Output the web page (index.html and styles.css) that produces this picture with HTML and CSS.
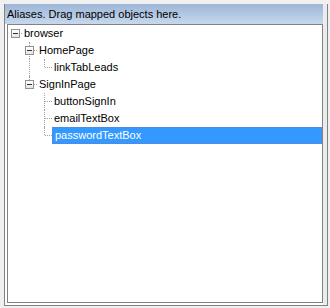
FILE: index.html
```html
<!DOCTYPE html>
<html lang="en">
<head>
  <meta charset="UTF-8" />
  <title>Aliases</title>
  <link rel="stylesheet" href="styles.css">
</head>
<body>

  <div class="frame">
    <div class="main">
      <div class="header">Aliases. Drag mapped objects here.</div>
      <div class="body">
        <div class="tree">

          <div class="row">
            <div class="cell"><span class="h"></span><span class="box"></span></div>
            <span class="label">browser</span>
          </div>

          <div class="row">
            <div class="cell"></div>
            <div class="cell"><span class="v-up"></span><span class="v-down"></span><span class="h"></span><span class="box"></span></div>
            <span class="label">HomePage</span>
          </div>

          <div class="row">
            <div class="cell"></div>
            <div class="cell"><span class="v-full"></span></div>
            <div class="cell"><span class="v-up"></span><span class="h"></span></div>
            <span class="label">linkTabLeads</span>
          </div>

          <div class="row">
            <div class="cell"></div>
            <div class="cell"><span class="v-up"></span><span class="h"></span><span class="box"></span></div>
            <span class="label">SignInPage</span>
          </div>

          <div class="row">
            <div class="cell"></div>
            <div class="cell"></div>
            <div class="cell"><span class="v-full"></span><span class="h"></span></div>
            <span class="label">buttonSignIn</span>
          </div>

          <div class="row">
            <div class="cell"></div>
            <div class="cell"></div>
            <div class="cell"><span class="v-full"></span><span class="h"></span></div>
            <span class="label">emailTextBox</span>
          </div>

          <div class="row">
            <div class="cell"></div>
            <div class="cell"></div>
            <div class="cell"><span class="v-up"></span><span class="h"></span></div>
            <span class="label selected">passwordTextBox</span>
          </div>

        </div>
      </div>
    </div>
    <div class="splitter"></div>
  </div>

</body>
</html>
```

FILE: styles.css
```css
html, body {
  margin: 0;
  padding: 0;
  background-color: #f0f0f0;
  font-family: 'Liberation Sans', Arial, sans-serif;
  font-size: 11px;
  color: black;
}

body {
  padding: 4px 0 0 4px;
}

.frame {
  display: flex;
  width: 322px;
  height: 301px;
  background: white;
  border: 1px solid #828282;
  border-top: none;
}

.main {
  display: flex;
  flex-direction: column;
  width: 318px;
}

.splitter {
  width: 4px;
  background-color: #ececec;
}

.header {
  height: 20px;
  line-height: 20px;
  padding-left: 2px;
  background: linear-gradient(#9db6d6, #c6d8ed);
  white-space: nowrap;
}

.body {
  flex: 1;
  display: flex;
  padding: 0 0 2px 2px;
}

.tree {
  flex: 1;
  border: 1px solid #828282;
  background: white;
}

.row {
  display: flex;
  height: 17px;
}

.cell {
  position: relative;
  width: 15px;
  height: 17px;
  flex: none;
}

.cell:first-child {
  width: 14px;
}

.v-up,
.v-down,
.v-full,
.h {
  position: absolute;
  border-color: #a0a0a0;
  border-style: dotted;
  border-width: 0;
}

.v-up {
  left: 7px;
  top: 0;
  height: 8px;
  border-left-width: 1px;
}

.v-down {
  left: 7px;
  top: 9px;
  bottom: 0;
  border-left-width: 1px;
}

.v-full {
  left: 7px;
  top: 0;
  bottom: 0;
  border-left-width: 1px;
}

.h {
  left: 8px;
  top: 8px;
  right: 0;
  border-top-width: 1px;
}

.box {
  position: absolute;
  left: 3px;
  top: 4px;
  width: 7px;
  height: 7px;
  border: 1px solid #919191;
  background: linear-gradient(#ffffff, #e4e4e4);
}

.box::after {
  content: '';
  position: absolute;
  left: 1px;
  top: 3px;
  width: 5px;
  height: 1px;
  background: #333;
}

.label {
  padding: 0 2px;
  line-height: 17px;
  white-space: nowrap;
}

.selected {
  flex: 1;
  height: 15px;
  line-height: 15px;
  color: white;
  background-color: #3399ff;
  border: 1px dotted #6a7fc8;
}
```
